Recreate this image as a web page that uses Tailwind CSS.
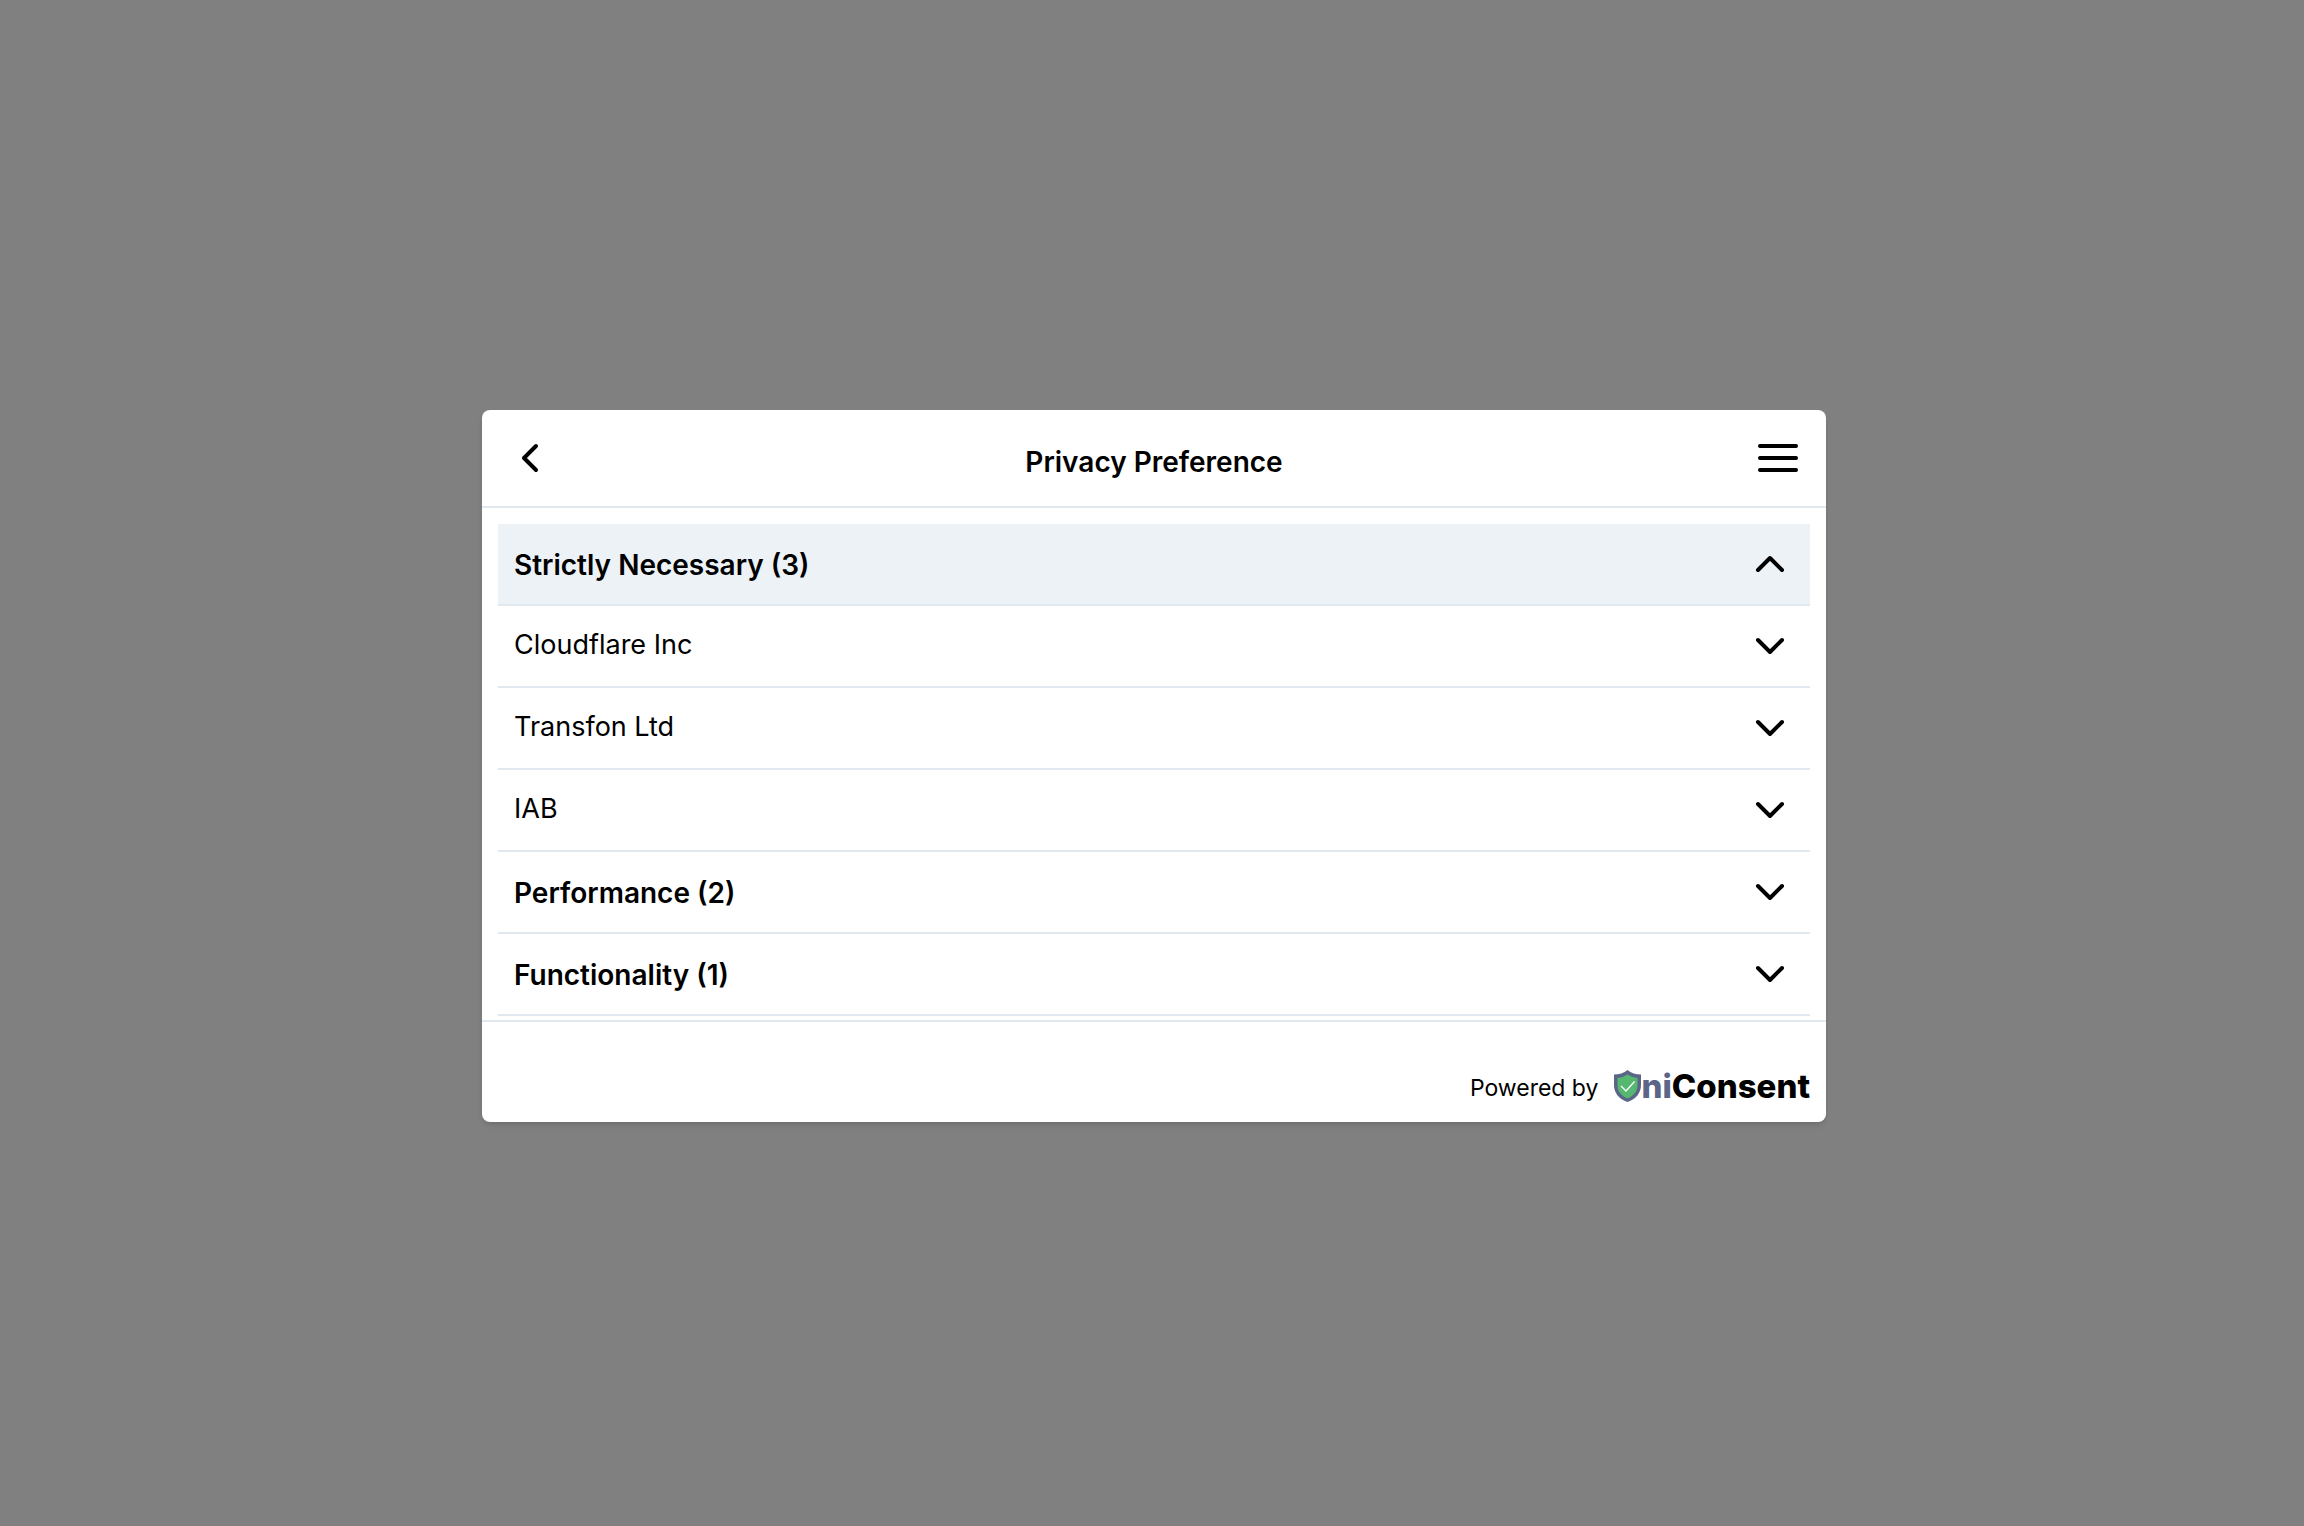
<!DOCTYPE html>
<html lang="en">
<head>
<meta charset="utf-8">
<meta name="viewport" content="width=device-width, initial-scale=1">
<title>Privacy Preference</title>
<script src="https://cdn.jsdelivr.net/npm/@tailwindcss/browser@4"></script>
</head>
<body class="bg-[#808080] font-[Inter,sans-serif] text-black">
<svg class="hidden" aria-hidden="true">
  <symbol id="down" viewBox="0 0 24 24"><path d="M6 9l6 6 6-6"/></symbol>
  <symbol id="up" viewBox="0 0 24 24"><path d="M18 15l-6-6-6 6"/></symbol>
</svg>
<div class="flex min-h-screen items-center justify-center pt-1.5 pl-1">
  <main role="dialog" aria-labelledby="title" class="w-full max-w-[1344px] overflow-hidden rounded-lg bg-white shadow-md">
    <header class="flex items-center justify-between border-b-2 border-[#e2e8f0] p-6">
      <button type="button" aria-label="Back" class="size-12">
        <svg viewBox="0 0 24 24" class="size-12 fill-none stroke-black stroke-2" stroke-linecap="round" stroke-linejoin="round"><path d="M15 18l-6-6 6-6"/></svg>
      </button>
      <h1 id="title" class="pt-2 text-[28px] leading-10 font-semibold">Privacy Preference</h1>
      <button type="button" aria-label="Menu" class="size-12">
        <svg viewBox="0 0 24 24" class="size-12 fill-none stroke-black stroke-2" stroke-linecap="round" stroke-linejoin="round"><path d="M3 12h18M3 6h18M3 18h18"/></svg>
      </button>
    </header>
    <section class="px-4 pt-4 pb-1 text-[27px] leading-10">
      <button type="button" aria-expanded="true" class="flex w-full items-center justify-between border-b-2 border-[#e2e8f0] bg-[#edf2f7] p-4 text-[28px] leading-10 font-semibold">
        <span class="pt-0.5">Strictly Necessary (3)</span>
        <svg class="size-12 fill-none stroke-black stroke-2" stroke-linecap="round" stroke-linejoin="round"><use href="#up"/></svg>
      </button>
      <button type="button" aria-expanded="false" class="flex w-full items-center justify-between border-b-2 border-[#e2e8f0] p-4">
        <span class="pb-0.5">Cloudflare Inc</span>
        <svg class="size-12 fill-none stroke-black stroke-2" stroke-linecap="round" stroke-linejoin="round"><use href="#down"/></svg>
      </button>
      <button type="button" aria-expanded="false" class="flex w-full items-center justify-between border-b-2 border-[#e2e8f0] p-4">
        <span class="pb-0.5">Transfon Ltd</span>
        <svg class="size-12 fill-none stroke-black stroke-2" stroke-linecap="round" stroke-linejoin="round"><use href="#down"/></svg>
      </button>
      <button type="button" aria-expanded="false" class="flex w-full items-center justify-between border-b-2 border-[#e2e8f0] p-4">
        <span class="pb-0.5">IAB</span>
        <svg class="size-12 fill-none stroke-black stroke-2" stroke-linecap="round" stroke-linejoin="round"><use href="#down"/></svg>
      </button>
      <button type="button" aria-expanded="false" class="flex w-full items-center justify-between border-b-2 border-[#e2e8f0] p-4 text-[28px] leading-10 font-semibold">
        <span class="pt-0.5">Performance (2)</span>
        <svg class="size-12 fill-none stroke-black stroke-2" stroke-linecap="round" stroke-linejoin="round"><use href="#down"/></svg>
      </button>
      <button type="button" aria-expanded="false" class="flex w-full items-center justify-between border-b-2 border-[#e2e8f0] p-4 text-[28px] leading-10 font-semibold">
        <span class="pt-0.5">Functionality (1)</span>
        <svg class="size-12 fill-none stroke-black stroke-2" stroke-linecap="round" stroke-linejoin="round"><use href="#down"/></svg>
      </button>
    </section>
    <footer class="flex items-center justify-end gap-4 border-t-2 border-[#e2e8f0] px-4 pt-11 pb-4">
      <span class="pt-1 text-[23px] leading-9">Powered by</span>
      <a href="#" aria-label="UniConsent" class="flex items-center text-[33px] leading-10 font-extrabold">
        <svg viewBox="0 0 27 32" class="h-8 w-[27px]">
          <path d="M13.5 0C10 3 5 4.500 0 4.500V15c0 8 5 14 13.500 17C22 29 27 23 27 15V4.500C22 4.500 17 3 13.500 0z" fill="#5b6587"/>
          <path d="M13.500 4.500C10.500 6.500 7 7.700 3.500 8v7.500c0 6 4 10.500 10 13 6-2.500 10-7 10-13V8c-3.500-.3-7-1.500-10-3.500z" fill="#56b870"/>
          <path d="M7 16l5 5 8.500-9.500" fill="none" stroke="#fff" stroke-width="1.300"/>
        </svg>
        <span class="text-[#5b6587]">ni</span><span>Consent</span>
      </a>
    </footer>
  </main>
</div>
</body>
</html>
